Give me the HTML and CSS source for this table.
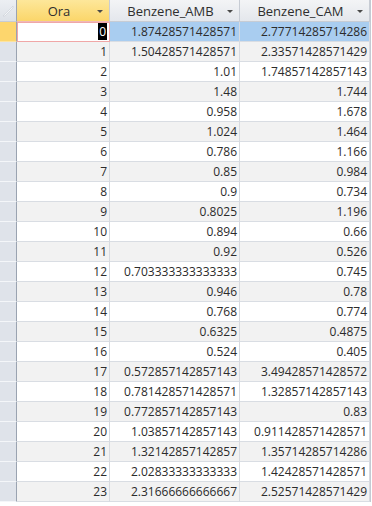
FILE: index.html
```html
<!DOCTYPE html>
<html>
<head>
<meta charset="utf-8">
<link rel="stylesheet" href="styles.css">
</head>
<body>
<div class="sheet">
  <div class="row head">
    <div class="sel corner"><svg width="12" height="12" viewBox="0 0 12 12"><path d="M11 1 L11 3 L3 11 L1 11 Z" fill="#f4f6f8" stroke="#c9ced6" stroke-width="0.6"/></svg></div>
    <div class="hcell active"><span class="htext">Ora</span><span class="arrow"></span></div>
    <div class="hcell"><span class="htext">Benzene_AMB</span><span class="arrow"></span></div>
    <div class="hcell"><span class="htext">Benzene_CAM</span><span class="arrow"></span></div>
  </div>
  <div class="row current"><div class="sel cur"></div><div class="cell focus"><span class="caret">0</span></div><div class="cell hl">1.87428571428571</div><div class="cell hl">2.77714285714286</div></div>
  <div class="row alt"><div class="sel"></div><div class="cell">1</div><div class="cell">1.50428571428571</div><div class="cell">2.33571428571429</div></div>
  <div class="row"><div class="sel"></div><div class="cell">2</div><div class="cell">1.01</div><div class="cell">1.74857142857143</div></div>
  <div class="row alt"><div class="sel"></div><div class="cell">3</div><div class="cell">1.48</div><div class="cell">1.744</div></div>
  <div class="row"><div class="sel"></div><div class="cell">4</div><div class="cell">0.958</div><div class="cell">1.678</div></div>
  <div class="row alt"><div class="sel"></div><div class="cell">5</div><div class="cell">1.024</div><div class="cell">1.464</div></div>
  <div class="row"><div class="sel"></div><div class="cell">6</div><div class="cell">0.786</div><div class="cell">1.166</div></div>
  <div class="row alt"><div class="sel"></div><div class="cell">7</div><div class="cell">0.85</div><div class="cell">0.984</div></div>
  <div class="row"><div class="sel"></div><div class="cell">8</div><div class="cell">0.9</div><div class="cell">0.734</div></div>
  <div class="row alt"><div class="sel"></div><div class="cell">9</div><div class="cell">0.8025</div><div class="cell">1.196</div></div>
  <div class="row"><div class="sel"></div><div class="cell">10</div><div class="cell">0.894</div><div class="cell">0.66</div></div>
  <div class="row alt"><div class="sel"></div><div class="cell">11</div><div class="cell">0.92</div><div class="cell">0.526</div></div>
  <div class="row"><div class="sel"></div><div class="cell">12</div><div class="cell">0.703333333333333</div><div class="cell">0.745</div></div>
  <div class="row alt"><div class="sel"></div><div class="cell">13</div><div class="cell">0.946</div><div class="cell">0.78</div></div>
  <div class="row"><div class="sel"></div><div class="cell">14</div><div class="cell">0.768</div><div class="cell">0.774</div></div>
  <div class="row alt"><div class="sel"></div><div class="cell">15</div><div class="cell">0.6325</div><div class="cell">0.4875</div></div>
  <div class="row"><div class="sel"></div><div class="cell">16</div><div class="cell">0.524</div><div class="cell">0.405</div></div>
  <div class="row alt"><div class="sel"></div><div class="cell">17</div><div class="cell">0.572857142857143</div><div class="cell">3.49428571428572</div></div>
  <div class="row"><div class="sel"></div><div class="cell">18</div><div class="cell">0.781428571428571</div><div class="cell">1.32857142857143</div></div>
  <div class="row alt"><div class="sel"></div><div class="cell">19</div><div class="cell">0.772857142857143</div><div class="cell">0.83</div></div>
  <div class="row"><div class="sel"></div><div class="cell">20</div><div class="cell">1.03857142857143</div><div class="cell">0.911428571428571</div></div>
  <div class="row alt"><div class="sel"></div><div class="cell">21</div><div class="cell">1.32142857142857</div><div class="cell">1.35714285714286</div></div>
  <div class="row"><div class="sel"></div><div class="cell">22</div><div class="cell">2.02833333333333</div><div class="cell">1.42428571428571</div></div>
  <div class="row alt"><div class="sel"></div><div class="cell">23</div><div class="cell">2.31666666666667</div><div class="cell">2.52571428571429</div></div>
</div>
</body>
</html>
```
FILE: styles.css
```css
* { box-sizing: border-box; }
html, body { margin: 0; padding: 0; background: #ffffff; }
body {
  font-family: "Open Sans", "Liberation Sans", sans-serif;
  font-size: 12px;
  color: #2b2b2b;
}
.sheet {
  display: flex;
  flex-direction: column;
  width: 371px;
  border-right: 1px solid #c4cad3;
}
.row {
  display: grid;
  grid-template-columns: 17px 93px 130px 130px;
  height: 20px;
}
.row.head { height: 22px; }
.row.alt .cell { background: #f2f2f2; }
.sel {
  background: #dfe3ea;
  border-right: 1px solid #9aa3b1;
  border-bottom: 1px solid #f4f6f9;
}
.sel.corner {
  background: linear-gradient(#eceff3, #dde1e7);
  border-bottom: 1px solid #c7ccd4;
  display: flex;
  align-items: center;
  justify-content: center;
}
.sel.cur { background: #fdd66d; border-bottom: 1px solid #fde3a0; }
.hcell {
  display: flex;
  align-items: center;
  padding: 0 6px 0 4px;
  background: linear-gradient(#f3f4f6, #e4e7ec);
  border-right: 1px solid #c7ccd4;
  border-bottom: 1px solid #c7ccd4;
  color: #2e2e2e;
  font-size: 13px;
}
.hcell.active {
  background: linear-gradient(#fde79a, #fbd66a);
  border-bottom: 1px solid #f0b9b9;
}
.htext { flex: 1; text-align: center; }
.arrow {
  width: 0; height: 0;
  border-left: 3px solid transparent;
  border-right: 3px solid transparent;
  border-top: 3px solid #4a4a4a;
  margin-top: 1px;
}
.cell {
  text-align: right;
  padding: 0 2px 0 2px;
  line-height: 19px;
  border-right: 1px solid #d6dae0;
  border-bottom: 1px solid #d9dde3;
  white-space: nowrap;
  overflow: hidden;
}
.cell.focus {
  background: #ffffff;
  border: 1px solid #f0a7a7;
  line-height: 18px;
}
.cell.hl { background: #a9cdf0; }
.caret { background: #000000; color: #ffffff; padding: 0 1px; }
```
